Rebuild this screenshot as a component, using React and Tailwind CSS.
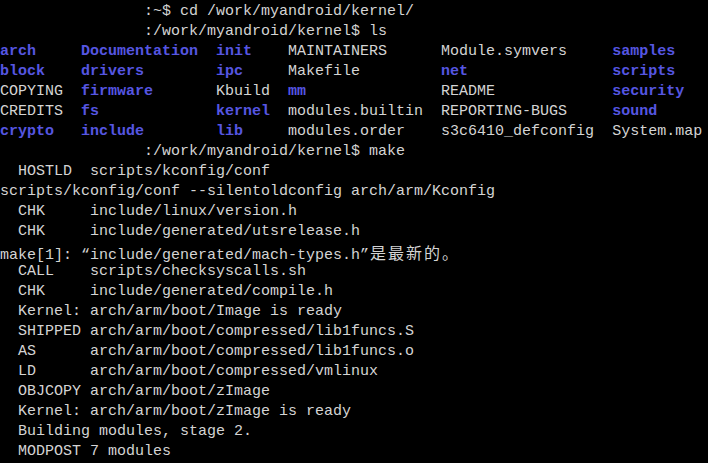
import React from "react";

const B = "b";
const lsRows = [
  [["arch", B], ["Documentation", B], ["init", B], ["MAINTAINERS"], ["Module.symvers"], ["samples", B]],
  [["block", B], ["drivers", B], ["ipc", B], ["Makefile"], ["net", B], ["scripts", B]],
  [["COPYING"], ["firmware", B], ["Kbuild"], ["mm", B], ["README"], ["security", B]],
  [["CREDITS"], ["fs", B], ["kernel", B], ["modules.builtin"], ["REPORTING-BUGS"], ["sound", B]],
  [["crypto", B], ["include", B], ["lib", B], ["modules.order"], ["s3c6410_defconfig"], ["System.map"]],
];
const widths = [9, 15, 8, 17, 19, 12];

const pre = "                ";

const after = [
  "  CALL    scripts/checksyscalls.sh",
  "  CHK     include/generated/compile.h",
  "  Kernel: arch/arm/boot/Image is ready",
  "  SHIPPED arch/arm/boot/compressed/lib1funcs.S",
  "  AS      arch/arm/boot/compressed/lib1funcs.o",
  "  LD      arch/arm/boot/compressed/vmlinux",
  "  OBJCOPY arch/arm/boot/zImage",
  "  Kernel: arch/arm/boot/zImage is ready",
  "  Building modules, stage 2.",
  "  MODPOST 7 modules",
];

function Line({ children }) {
  return <div className="h-[20px] leading-[20px] whitespace-pre">{children}</div>;
}

function Cjk({ c }) {
  return (
    <span
      className="inline-block w-[18px] text-center text-[16px] leading-[20px]"
      style={{ fontFamily: '"Noto Sans CJK SC", sans-serif' }}
    >
      {c}
    </span>
  );
}

export default function App() {
  return (
    <div
      className="w-[708px] h-[463px] overflow-hidden bg-black pt-[2px] text-[#d4d4d4] text-[15px]"
      style={{ fontFamily: '"Liberation Mono", monospace' }}
    >
      <Line>{pre + ":~$ cd /work/myandroid/kernel/"}</Line>
      <Line>{pre + ":/work/myandroid/kernel$ ls"}</Line>
      {lsRows.map((row, i) => (
        <Line key={i}>
          {row.map(([t, b], j) => (
            <span key={j} className={b ? "font-bold text-[#5656e2]" : ""}>
              {j < row.length - 1 ? t.padEnd(widths[j], " ") : t}
            </span>
          ))}
        </Line>
      ))}
      <Line>{pre + ":/work/myandroid/kernel$ make"}</Line>
      <Line>{"  HOSTLD  scripts/kconfig/conf"}</Line>
      <Line>{"scripts/kconfig/conf --silentoldconfig arch/arm/Kconfig"}</Line>
      <Line>{"  CHK     include/linux/version.h"}</Line>
      <Line>{"  CHK     include/generated/utsrelease.h"}</Line>
      <Line>
        {"make[1]: "}
        <span className="inline-block w-[9px] text-right">“</span>
        {"include/generated/mach-types.h"}
        <span className="inline-block w-[9px]">”</span>
        <Cjk c="是" />
        <Cjk c="最" />
        <Cjk c="新" />
        <Cjk c="的" />
        <Cjk c="。" />
      </Line>
      {after.map((l, i) => (
        <Line key={i}>{l}</Line>
      ))}
    </div>
  );
}
